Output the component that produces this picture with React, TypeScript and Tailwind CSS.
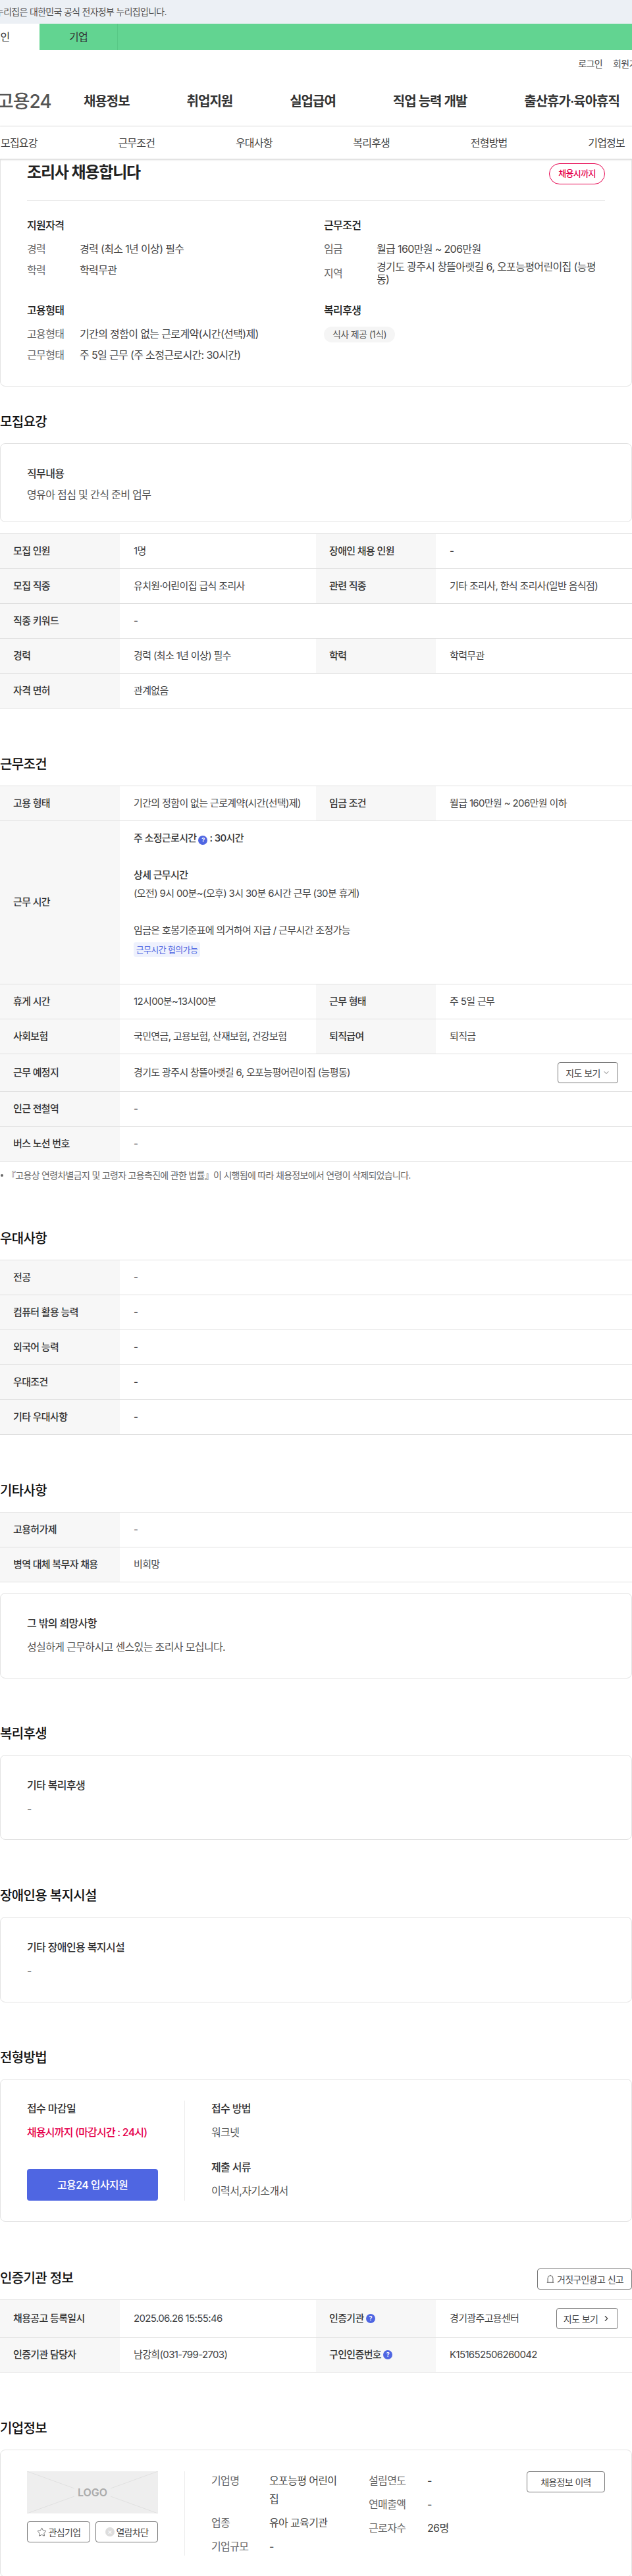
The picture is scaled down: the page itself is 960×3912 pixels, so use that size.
import type { ReactNode } from "react";
import { ChevronDown, ChevronRight, Star } from "lucide-react";

function Help() {
  return (
    <span className="mx-[3px] inline-flex size-[14px] items-center justify-center rounded-full bg-[#4f66e2] align-[-1px] text-[9px] font-bold text-white">
      ?
    </span>
  );
}

function Heading({ children }: { children: ReactNode }) {
  return <h2 className="mb-[17px] h-[30px] text-[20px] leading-[30px] font-medium text-[#111]">{children}</h2>;
}

function Label({ children }: { children: ReactNode }) {
  return (
    <div className="flex w-[182px] shrink-0 items-center bg-[#f7f7f7] pl-[20px] text-[15px] font-medium text-[#333]">
      {children}
    </div>
  );
}

function Row({ items, tall }: { items: ReactNode[][]; tall?: boolean }) {
  return (
    <div className={`flex border-b border-[#e0e0e0] ${tall ? "h-[57px]" : "h-[53px]"}`}>
      {items.map(([label, value], i) => (
        <div key={i} className={`flex ${items.length === 1 || i === 1 ? "flex-1" : "w-[480px] shrink-0"}`}>
          <Label>{label}</Label>
          <div className="flex flex-1 items-center pl-[21px] text-[15px] text-[#444]">{value}</div>
        </div>
      ))}
    </div>
  );
}

function Table({ children }: { children: ReactNode }) {
  return <div className="border-t border-[#e0e0e0]">{children}</div>;
}

function TextCard({ title, text, className, short }: { title: string; text: string; className?: string; short?: boolean }) {
  return (
    <div className={`rounded-[8px] border border-[#e2e2e2] px-[40px] pt-[33px] ${className ?? ""}`}>
      <div className="h-[24px] text-[16px] leading-[24px] font-medium text-[#333]">{title}</div>
      <div className={`h-[24px] text-[16px] leading-[24px] text-[#555] ${short ? "mt-[8px]" : "mt-[12px]"}`}>{text}</div>
    </div>
  );
}

function SmallButton({ children, className }: { children: ReactNode; className?: string }) {
  return (
    <button
      type="button"
      className={`flex items-center justify-center gap-[3px] rounded-[4px] border border-[#777] text-[14px] text-[#444] ${className ?? ""}`}
    >
      {children}
    </button>
  );
}

function InfoLine({ label, children }: { label: string; children: ReactNode }) {
  return (
    <div className="flex h-[24px] items-center text-[16px]">
      <span className="w-[80px] shrink-0 text-[#666]">{label}</span>
      <span className="text-[#444]">{children}</span>
    </div>
  );
}

function BlockTitle({ children }: { children: ReactNode }) {
  return <div className="mb-[12px] h-[24px] text-[16px] leading-[24px] font-medium text-[#222]">{children}</div>;
}

const navItems = ["채용정보", "취업지원", "실업급여", "직업 능력 개발", "출산휴가·육아휴직"];
const subNav = ["모집요강", "근무조건", "우대사항", "복리후생", "전형방법", "기업정보"];

export default function App() {
  return (
    <div className="h-[3912px] w-[960px] overflow-hidden bg-white tracking-[-0.04em] text-[#222] [font-family:Inter,'Noto_Sans_CJK_KR',sans-serif]">
      {/* top strip */}
      <div className="h-[36px] whitespace-nowrap bg-[#ecf0f5] text-[14px] leading-[36px] text-[#555]">
        <span className="-ml-[7px] inline-block tracking-[-0.05em]">누리집은 대한민국 공식 전자정부 누리집입니다.</span>
      </div>
      <div className="flex h-[40px] bg-[#62d491] text-[16px] leading-[40px] text-[#333]">
        <div className="-ml-[59px] w-[119px] bg-white text-center">개인</div>
        <div className="w-[119px] border-r border-[#58c886] text-center">기업</div>
      </div>

      <div className="flex h-[40px] items-center justify-end gap-[16px] whitespace-nowrap text-[14px] text-[#444]">
        <span>로그인</span>
        <span className="-mr-[20px]">회원가입</span>
      </div>

      <div className="flex h-[76px] items-center whitespace-nowrap border-b border-[#e8e8e8] text-[20px] font-semibold tracking-[-0.05em] text-[#333]">
        <span className="-ml-[5px] w-[132px] shrink-0 text-[28px] font-medium text-[#555]">고용24</span>
        <div className="flex gap-[87px]">
          {navItems.map((n) => (
            <span key={n}>{n}</span>
          ))}
        </div>
      </div>

      <div className="relative z-10 flex h-[49px] items-center justify-between bg-white pr-[11px] pl-[1px] text-[16px] tracking-[-0.05em] text-[#444] shadow-[0_1px_3px_rgba(0,0,0,0.25)]">
        {subNav.map((n) => (
          <span key={n}>{n}</span>
        ))}
      </div>

      {/* summary card */}
      <div className="-mt-[4px] h-[350px] rounded-[8px] border border-[#e2e2e2] px-[40px] pt-[10px]">
        <div className="flex h-[32px] items-center justify-between">
          <h1 className="-mt-[4px] text-[24px] font-semibold tracking-[-0.05em] text-[#222]">조리사 채용합니다</h1>
          <span className="flex h-[32px] w-[85px] items-center justify-center rounded-full border border-[#e6004d] text-[13px] font-medium text-[#e6004d]">
            채용시까지
          </span>
        </div>
        <div className="mt-[24px] grid grid-cols-[451px_1fr] gap-y-[25px] border-t border-[#ececec] pt-[25px]">
          <div>
            <BlockTitle>지원자격</BlockTitle>
            <div className="flex flex-col gap-[8px]">
              <InfoLine label="경력">경력 (최소 1년 이상) 필수</InfoLine>
              <InfoLine label="학력">학력무관</InfoLine>
            </div>
          </div>
          <div>
            <BlockTitle>근무조건</BlockTitle>
            <div className="flex flex-col gap-[6px]">
              <InfoLine label="임금">월급 160만원 ~ 206만원</InfoLine>
              <div className="flex h-[38px] items-center text-[16px]">
                <span className="w-[80px] shrink-0 text-[#666]">지역</span>
                <span className="w-[347px] leading-[19px] text-[#444]">경기도 광주시 창뜰아랫길 6, 오포능평어린이집 (능평동)</span>
              </div>
            </div>
          </div>
          <div>
            <BlockTitle>고용형태</BlockTitle>
            <div className="flex flex-col gap-[8px]">
              <InfoLine label="고용형태">기간의 정함이 없는 근로계약(시간(선택)제)</InfoLine>
              <InfoLine label="근무형태">주 5일 근무 (주 소정근로시간: 30시간)</InfoLine>
            </div>
          </div>
          <div>
            <BlockTitle>복리후생</BlockTitle>
            <span className="inline-flex h-[24px] w-[108px] items-center justify-center rounded-full bg-[#f5f5f5] text-[14px] text-[#555]">
              식사 제공 (1식)
            </span>
          </div>
        </div>
      </div>

      {/* 모집요강 */}
      <section className="pt-[39px]">
        <Heading>모집요강</Heading>
        <TextCard short className="h-[120px]" title="직무내용" text="영유아 점심 및 간식 준비 업무" />
        <div className="mt-[17px]">
          <Table>
            <Row items={[["모집 인원", "1명"], ["장애인 채용 인원", "-"]]} />
            <Row items={[["모집 직종", "유치원·어린이집 급식 조리사"], ["관련 직종", "기타 조리사, 한식 조리사(일반 음식점)"]]} />
            <Row items={[["직종 키워드", "-"]]} />
            <Row items={[["경력", "경력 (최소 1년 이상) 필수"], ["학력", "학력무관"]]} />
            <Row items={[["자격 면허", "관계없음"]]} />
          </Table>
        </div>
      </section>

      {/* 근무조건 */}
      <section className="pt-[70px]">
        <Heading>근무조건</Heading>
        <Table>
          <Row items={[["고용 형태", "기간의 정함이 없는 근로계약(시간(선택)제)"], ["임금 조건", "월급 160만원 ~ 206만원 이하"]]} />
          <div className="flex h-[248px] border-b border-[#e0e0e0]">
            <Label>근무 시간</Label>
            <div className="flex-1 pt-[12px] pl-[21px] text-[15px] leading-[28px] text-[#444]">
              <div className="font-medium text-[#333]">
                주 소정근로시간
                <Help />: 30시간
              </div>
              <div className="mt-[28px] font-medium text-[#333]">상세 근무시간</div>
              <div>(오전) 9시 00분~(오후) 3시 30분 6시간 근무 (30분 휴게)</div>
              <div className="mt-[28px]">임금은 호봉기준표에 의거하여 지급 / 근무시간 조정가능</div>
              <span className="mt-[4px] flex h-[22px] w-[101px] items-center justify-center rounded-[3px] bg-[#eef1fd] text-[13px] leading-none tracking-[-0.05em] text-[#4f66e2]">
                근무시간 협의가능
              </span>
            </div>
          </div>
          <Row items={[["휴게 시간", "12시00분~13시00분"], ["근무 형태", "주 5일 근무"]]} />
          <Row items={[["사회보험", "국민연금, 고용보험, 산재보험, 건강보험"], ["퇴직급여", "퇴직금"]]} />
          <Row
            tall
            items={[
              [
                "근무 예정지",
                <div className="flex w-full items-center justify-between pr-[21px]">
                  경기도 광주시 창뜰아랫길 6, 오포능평어린이집 (능평동)
                  <SmallButton className="h-[32px] w-[92px]">
                    지도 보기
                    <ChevronDown className="size-[12px]" strokeWidth={1.5} />
                  </SmallButton>
                </div>,
              ],
            ]}
          />
          <Row items={[["인근 전철역", "-"]]} />
          <Row items={[["버스 노선 번호", "-"]]} />
        </Table>
        <div className="flex h-[41px] items-center gap-[5px] whitespace-nowrap text-[14px] tracking-[-0.05em] text-[#666]">
          <span className="ml-[1px] size-[4px] shrink-0 rounded-full bg-[#666]" />
          『고용상 연령차별금지 및 고령자 고용촉진에 관한 법률』이 시행됨에 따라 채용정보에서 연령이 삭제되었습니다.
        </div>
      </section>

      {/* 우대사항 */}
      <section className="pt-[61px]">
        <Heading>우대사항</Heading>
        <Table>
          <Row items={[["전공", "-"]]} />
          <Row items={[["컴퓨터 활용 능력", "-"]]} />
          <Row items={[["외국어 능력", "-"]]} />
          <Row items={[["우대조건", "-"]]} />
          <Row items={[["기타 우대사항", "-"]]} />
        </Table>
      </section>

      {/* 기타사항 */}
      <section className="pt-[70px]">
        <Heading>기타사항</Heading>
        <Table>
          <Row items={[["고용허가제", "-"]]} />
          <Row items={[["병역 대체 복무자 채용", "비희망"]]} />
        </Table>
        <TextCard className="mt-[16px] h-[130px]" title="그 밖의 희망사항" text="성실하게 근무하시고 센스있는 조리사 모십니다." />
      </section>

      <section className="pt-[69px]">
        <Heading>복리후생</Heading>
        <TextCard className="h-[129px]" title="기타 복리후생" text="-" />
      </section>

      <section className="pt-[70px]">
        <Heading>장애인용 복지시설</Heading>
        <TextCard className="h-[130px]" title="기타 장애인용 복지시설" text="-" />
      </section>

      {/* 전형방법 */}
      <section className="pt-[69px]">
        <Heading>전형방법</Heading>
        <div className="flex h-[217px] rounded-[8px] border border-[#e2e2e2] px-[40px] pt-[32px]">
          <div className="h-[152px] w-[240px] shrink-0 border-r border-[#ececec] pr-[40px]">
            <div className="h-[24px] text-[16px] leading-[24px] font-medium text-[#333]">접수 마감일</div>
            <div className="mt-[12px] h-[24px] text-[16px] leading-[24px] font-medium tracking-[-0.05em] text-[#e6004d]">채용시까지 (마감시간 : 24시)</div>
            <button type="button" className="mt-[44px] h-[48px] w-[199px] rounded-[4px] bg-[#4f66e2] text-[16px] font-medium text-white">
              고용24 입사지원
            </button>
          </div>
          <div className="pl-[40px] text-[16px] leading-[24px]">
            <div className="h-[24px] font-medium text-[#333]">접수 방법</div>
            <div className="mt-[12px] h-[24px] text-[#555]">워크넷</div>
            <div className="mt-[29px] h-[24px] font-medium text-[#333]">제출 서류</div>
            <div className="mt-[12px] h-[24px] text-[#555]">이력서,자기소개서</div>
          </div>
        </div>
      </section>

      {/* 인증기관 정보 */}
      <section className="pt-[71px]">
        <div className="flex items-start justify-between">
          <Heading>인증기관 정보</Heading>
          <SmallButton className="h-[32px] w-[144px]">
            <svg viewBox="0 0 16 16" className="size-[14px]" fill="none" stroke="#444" strokeWidth="1">
              <path d="M3.5 14V6.5a4.5 4.5 0 0 1 9 0V14" />
              <path d="M2 14h12" />
              <path d="M8 2v-1" />
            </svg>
            거짓구인광고 신고
          </SmallButton>
        </div>
        <Table>
          <Row
            tall
            items={[
              ["채용공고 등록일시", "2025.06.26 15:55:46"],
              [
                <span className="flex items-center">
                  인증기관
                  <Help />
                </span>,
                <div className="flex w-full items-center justify-between pr-[21px]">
                  경기광주고용센터
                  <SmallButton className="h-[32px] w-[94px]">
                    지도 보기
                    <ChevronRight className="ml-[3px] size-[14px]" strokeWidth={2} />
                  </SmallButton>
                </div>,
              ],
            ]}
          />
          <Row
            items={[
              ["인증기관 담당자", "남강희(031-799-2703)"],
              [
                <span className="flex items-center">
                  구인인증번호
                  <Help />
                </span>,
                "K151652506260042",
              ],
            ]}
          />
        </Table>
      </section>

      {/* 기업정보 */}
      <section className="pt-[70px]">
        <Heading>기업정보</Heading>
        <div className="flex h-[194px] rounded-[8px] border border-[#e2e2e2] px-[40px] pt-[32px] text-[16px] text-[#444]">
          <div className="h-[128px] w-[240px] shrink-0 border-r border-[#ececec] pr-[40px]">
            <div className="relative flex h-[64px] items-center justify-center bg-[#eeeeee] text-[16px] font-semibold tracking-normal text-[#aaa]">
              <svg viewBox="0 0 199 64" className="absolute inset-0 size-full" fill="none" stroke="#e0e0e0">
                <path d="M0 0 72 26M199 0 127 26M0 64 72 38M199 64 127 38" />
              </svg>
              <span className="relative">LOGO</span>
            </div>
            <div className="mt-[12px] flex justify-between">
              <SmallButton className="h-[32px] w-[96px]">
                <Star className="size-[15px]" strokeWidth={1.25} />
                관심기업
              </SmallButton>
              <SmallButton className="h-[32px] w-[95px]">
                <span className="flex size-[14px] items-center justify-center rounded-full bg-[#ddd] text-[11px] leading-none text-white">×</span>
                열람차단
              </SmallButton>
            </div>
          </div>
          <div className="w-[279px] shrink-0 pl-[40px] leading-[28px]">
            <div className="flex">
              <span className="w-[88px] shrink-0 text-[#666]">기업명</span>
              <span className="w-[110px]">오포능평 어린이집</span>
            </div>
            <div className="mt-[8px] flex">
              <span className="w-[88px] shrink-0 text-[#666]">업종</span>
              유아 교육기관
            </div>
            <div className="mt-[8px] flex">
              <span className="w-[88px] shrink-0 text-[#666]">기업규모</span>-
            </div>
          </div>
          <div className="w-[240px] shrink-0 leading-[28px]">
            <div className="flex">
              <span className="w-[89px] shrink-0 text-[#666]">설립연도</span>-
            </div>
            <div className="mt-[8px] flex">
              <span className="w-[89px] shrink-0 text-[#666]">연매출액</span>-
            </div>
            <div className="mt-[8px] flex">
              <span className="w-[89px] shrink-0 text-[#666]">근로자수</span>26명
            </div>
          </div>
          <SmallButton className="h-[32px] w-[119px] shrink-0">채용정보 이력</SmallButton>
        </div>
      </section>
    </div>
  );
}
